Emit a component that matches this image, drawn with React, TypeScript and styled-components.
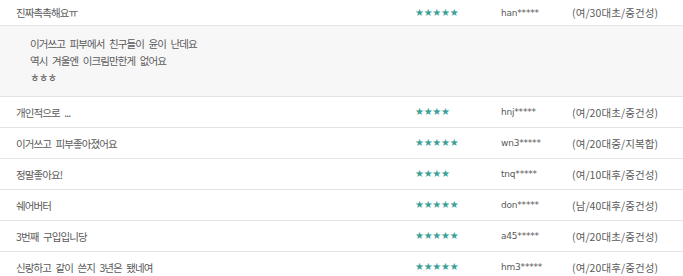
import styled, { createGlobalStyle } from 'styled-components';

interface IReview {
    title: string,
    stars: number,
    user: string,
    info: string,
    body?: string[],
}

const reviews: IReview[] = [
    { title: '진짜촉촉해요ㅠ', stars: 5, user: 'han*****', info: '(여/30대초/중건성)', body: ['이거쓰고 피부에서 친구들이 윤이 난데요', '역시 겨울엔 이크림만한게 없어요', 'ㅎㅎㅎ'] },
    { title: '개인적으로 ...', stars: 4, user: 'hnj*****', info: '(여/20대초/중건성)' },
    { title: '이거쓰고 피부좋아졌어요', stars: 5, user: 'wn3*****', info: '(여/20대중/지복합)' },
    { title: '정말좋아요!', stars: 4, user: 'tnq*****', info: '(여/10대후/중건성)' },
    { title: '쉐어버터', stars: 5, user: 'don*****', info: '(남/40대후/중건성)' },
    { title: '3번째 구입입니당', stars: 5, user: 'a45*****', info: '(여/20대초/중건성)' },
    { title: '신랑하고 같이 쓴지 3년은 됐네여', stars: 5, user: 'hm3*****', info: '(여/20대후/중건성)' },
]

const GlobalStyle = createGlobalStyle`
    body {
        margin: 0;
        background: #fff;
        font-family: "Noto Sans CJK KR", "DejaVu Sans", sans-serif;
    }
`

const List = styled.div`
    width: 683px;
    display: flex;
    flex-direction: column;
`

const Row = styled.div<{ $first?: boolean }>`
    height: ${p => p.$first ? 25 : 30}px;
    display: grid;
    grid-template-columns: 415px 86px 71px 1fr;
    align-items: center;
    border-bottom: 1px solid #e3e3e3;
    color: #5a5a5a;
    font-size: 10.5px;
    letter-spacing: -0.9px;
    word-spacing: 3px;
`

const Title = styled.div`
    padding-left: 16px;
    white-space: nowrap;
`

const Stars = styled.div`
    color: #3b9f98;
    font-family: "DejaVu Sans", sans-serif;
    font-size: 10px;
    letter-spacing: -0.3px;
    line-height: 1;
`

const User = styled.div`
    font-family: "DejaVu Sans", sans-serif;
    font-size: 9px;
    letter-spacing: -0.2px;
`

const Info = styled.div`
    white-space: nowrap;
    font-size: 10.5px;
    letter-spacing: 0.1px;
    word-spacing: 0;
`

const Body = styled.div`
    height: 61px;
    padding: 9px 0 0 30px;
    background: #f7f7f7;
    border-bottom: 1px solid #e3e3e3;
    color: #5a5a5a;
    font-size: 10.5px;
    letter-spacing: -0.9px;
    word-spacing: 3px;
    line-height: 17px;
`

export default function App() {
    return (
        <>
            <GlobalStyle />
            <List>
                {reviews.map((r, i) => (
                    <div key={i}>
                        <Row $first={i === 0}>
                            <Title>{r.title}</Title>
                            <Stars>{'★'.repeat(r.stars)}</Stars>
                            <User>{r.user}</User>
                            <Info>{r.info}</Info>
                        </Row>
                        {r.body && (
                            <Body>
                                {r.body.map((line, j) => <div key={j}>{line}</div>)}
                            </Body>
                        )}
                    </div>
                ))}
            </List>
        </>
    )
}
